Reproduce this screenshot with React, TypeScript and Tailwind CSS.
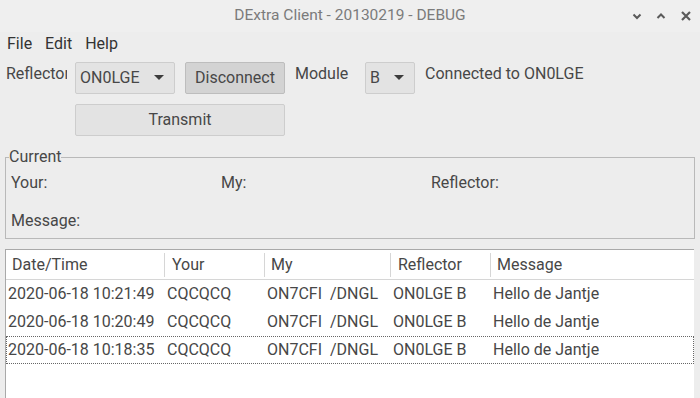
import React from "react";

type Row = {
  date: string;
  your: string;
  my: string;
  reflector: string;
  message: string;
};

const rows: Row[] = [
  { date: "2020-06-18 10:21:49", your: "CQCQCQ", my: "ON7CFI  /DNGL", reflector: "ON0LGE B", message: "Hello de Jantje" },
  { date: "2020-06-18 10:20:49", your: "CQCQCQ", my: "ON7CFI  /DNGL", reflector: "ON0LGE B", message: "Hello de Jantje" },
  { date: "2020-06-18 10:18:35", your: "CQCQCQ", my: "ON7CFI  /DNGL", reflector: "ON0LGE B", message: "Hello de Jantje" },
];

const Caret = () => (
  <svg width="10" height="6" viewBox="0 0 10 6">
    <path d="M0 0 L10 0 L5 5 Z" fill="#3c3c3c" />
  </svg>
);

const Combo = ({ value, width }: { value: string; width: string }) => (
  <div
    className={`${width} flex h-[32px] items-center justify-between rounded-[2px] border border-[#cdcdcd] bg-[#e3e3e3] pl-[4px] pr-[10px]`}>
    <span>{value}</span>
    <Caret />
  </div>
);

const App = () => {
  return (
    <div
      className="flex h-[398px] w-[700px] flex-col overflow-hidden bg-[#ededed] text-[16px] text-[#474747]"
      style={{ fontFamily: "Roboto, 'Liberation Sans', sans-serif" }}>
      {/* title bar */}
      <div className="relative flex h-[32px] shrink-0 items-center justify-center bg-[#efefef]">
        <span className="text-[15.5px] text-[#7b7b7b]">DExtra Client - 20130219 - DEBUG</span>
        <div className="absolute right-[8px] top-[10px] flex items-center gap-[14px]">
          <svg width="10" height="10" viewBox="0 0 10 10">
            <path d="M1.5 3.5 L5 7 L8.5 3.5" stroke="#5a5a5a" strokeWidth="2" fill="none" />
          </svg>
          <svg width="10" height="10" viewBox="0 0 10 10">
            <path d="M1.5 7 L5 3.5 L8.5 7" stroke="#5a5a5a" strokeWidth="2" fill="none" />
          </svg>
          <svg width="12" height="12" viewBox="0 0 12 12">
            <path d="M2 2 L10 10 M10 2 L2 10" stroke="#5a5a5a" strokeWidth="2.2" fill="none" />
          </svg>
        </div>
      </div>

      {/* menu */}
      <div className="mt-[1px] flex h-[22px] shrink-0 items-center gap-[13px] px-[7px] text-[#333]">
        <span>File</span>
        <span>Edit</span>
        <span>Help</span>
      </div>

      {/* controls */}
      <div className="mt-[7px] flex items-start">
        <div className="ml-[6px] w-[61px] overflow-hidden whitespace-nowrap pt-[1px] leading-[22px]">Reflector</div>
        <div className="ml-[8px]">
          <Combo value="ON0LGE" width="w-[100px]" />
        </div>
        <button className="ml-[10px] h-[32px] w-[100px] rounded-[2px] border border-[#bdbdbd] bg-[#d3d3d3]">
          Disconnect
        </button>
        <div className="ml-[10px] w-[70px] pt-[1px] leading-[22px]">Module</div>
        <Combo value="B" width="w-[50px]" />
        <div className="ml-[10px] pt-[1px] leading-[22px]">Connected to ON0LGE</div>
      </div>
      <div className="mt-[10px] pl-[75px]">
        <button className="h-[32px] w-[210px] rounded-[2px] border border-[#cdcdcd] bg-[#e3e3e3]">Transmit</button>
      </div>

      {/* current group */}
      <fieldset className="mx-[5px] mt-[12px] h-[91px] shrink-0 border border-[#b9b9b9] px-[5px]">
        <legend className="-ml-[2px] px-0 leading-[18px]">Current</legend>
        <div className="grid grid-cols-[210px_210px_1fr] pt-[8px] leading-[18px]">
          <span>Your:</span>
          <span>My:</span>
          <span>Reflector:</span>
          <span className="mt-[20px]">Message:</span>
        </div>
      </fieldset>

      {/* log table */}
      <div className="ml-[5px] mr-[6px] mt-[10px] flex-1 border-l border-t border-[#a9a9a9] bg-white">
        <div className="flex h-[30px] items-center border-b border-[#d6d6d6]">
          <div className="w-[159px] border-r border-[#d6d6d6] pl-[6px]">Date/Time</div>
          <div className="w-[100px] border-r border-[#d6d6d6] pl-[7px]">Your</div>
          <div className="w-[126px] border-r border-[#d6d6d6] pl-[6px]">My</div>
          <div className="w-[100px] border-r border-[#d6d6d6] pl-[7px]">Reflector</div>
          <div className="pl-[6px]">Message</div>
        </div>
        {rows.map((row, i) => (
          <div
            key={i}
            className={`flex h-[28px] items-center whitespace-pre border ${
              i === rows.length - 1 ? "border-dotted border-[#666]" : "border-transparent"
            }`}>
            <div className="w-[160px] pl-[1px]">{row.date}</div>
            <div className="w-[100px]">{row.your}</div>
            <div className="w-[126px]">{row.my}</div>
            <div className="w-[100px]">{row.reflector}</div>
            <div>{row.message}</div>
          </div>
        ))}
      </div>
    </div>
  );
};

export default App;
